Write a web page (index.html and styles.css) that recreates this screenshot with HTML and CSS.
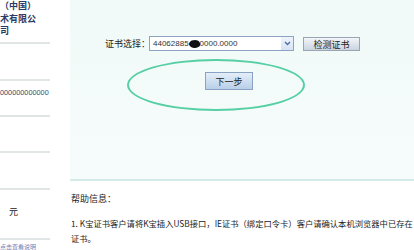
FILE: index.html
```html
<!DOCTYPE html>
<html>
<head>
  <meta charset="utf-8"/>
  <title>证书选择</title>
  <link rel="stylesheet" href="styles.css">
</head>
<body>
  <div class="page">
    <aside class="side">
      <div class="side-item item-1">
        <p class="corp">（中国）</p>
        <p class="corp">术有限公</p>
        <p class="corp">司</p>
      </div>
      <div class="side-item item-2"></div>
      <div class="side-item item-3">
        <p class="num">000000000000</p>
      </div>
      <div class="side-item item-4"></div>
      <div class="side-item item-5"></div>
      <div class="side-item item-6">
        <p class="unit">元</p>
      </div>
      <p class="side-link">点击查看说明</p>
    </aside>

    <main class="main">
      <section class="cert">
        <div class="cert-row">
          <span class="label">证书选择：</span>
          <div class="select">
            <span class="select-text">44062885<span class="blot"></span>0000.0000</span>
            <span class="select-arrow">
              <svg width="7" height="5" viewBox="0 0 7 5"><path d="M1 1 L3.5 3.5 L6 1" fill="none" stroke="#4d6fa6" stroke-width="1.4"/></svg>
            </span>
          </div>
          <button class="btn btn-check">检测证书</button>
        </div>
        <div class="next-row">
          <span class="ring"></span>
          <button class="btn btn-next">下一步</button>
        </div>
      </section>

      <section class="help">
        <p class="help-title">帮助信息：</p>
        <p class="help-text">1. K宝证书客户请将K宝插入USB接口，IE证书（绑定口令卡）客户请确认本机浏览器中已存在<br>证书。</p>
      </section>
    </main>
  </div>
</body>
</html>
```

FILE: styles.css
```css
body {
  margin: 0;
  background-color: #fff;
  font-family: "Liberation Sans", Arial, "Noto Sans CJK SC", sans-serif;
  font-size: 9px;
  color: #222;
}
p {
  margin: 0;
}
.page {
  display: flex;
  width: 414px;
  height: 250px;
  overflow: hidden;
}

/* left column */
.side {
  width: 50px;
  margin-right: 20px;
  flex-shrink: 0;
}
.side-item {
  box-sizing: border-box;
  border-bottom: 2px solid #e2e5e5;
}
.item-1 { height: 44px; }
.item-2 { height: 37px; }
.item-3 { height: 36px; padding-top: 6px; }
.item-4 { height: 36px; }
.item-5 { height: 37px; }
.item-6 { height: 50px; padding: 16px 0 0 9px; }
.corp {
  font-family: "Noto Sans CJK SC", sans-serif;
  font-weight: bold;
  color: #2a3a66;
  line-height: 12.5px;
  white-space: nowrap;
}
.num {
  color: #3b4766;
  font-size: 7.3px;
  line-height: 12px;
  white-space: nowrap;
}
.unit {
  font-family: "Noto Sans CJK SC", sans-serif;
  color: #222;
  line-height: 12px;
}
.side-link {
  font-family: "Noto Sans CJK SC", sans-serif;
  font-size: 6px;
  color: #6a84b8;
  margin-top: 2px;
  white-space: nowrap;
}

/* main area */
.main {
  flex: 1;
  display: flex;
  flex-direction: column;
}
.cert {
  position: relative;
  height: 181px;
  box-sizing: border-box;
  padding: 36px 0 0 35px;
  background: linear-gradient(#f1faf8, #f6fcfb);
  border-bottom: 2px solid #d5ebe7;
}
.cert-row {
  display: flex;
  align-items: center;
  height: 15px;
}
.label {
  font-family: "Noto Sans CJK SC", sans-serif;
  width: 44px;
  white-space: nowrap;
}
.select {
  display: flex;
  align-items: center;
  justify-content: space-between;
  box-sizing: border-box;
  width: 145px;
  height: 15px;
  border: 1px solid #8ea3c1;
  background-color: #fff;
  padding-left: 3px;
}
.select-text {
  font-size: 8px;
  color: #333;
  display: flex;
  align-items: center;
}
.blot {
  display: inline-block;
  width: 11px;
  height: 8px;
  background-color: #111;
  border-radius: 45% 55% 40% 60%;
  transform: rotate(-12deg);
}
.select-arrow {
  display: flex;
  align-items: center;
  justify-content: center;
  width: 12px;
  height: 13px;
  background: linear-gradient(#eef4fc, #d6e3f4);
}
.btn {
  font-family: "Noto Sans CJK SC", sans-serif;
  font-size: 9px;
  color: #222;
  padding: 0;
  cursor: pointer;
}
.btn-check {
  width: 57px;
  height: 14px;
  margin-left: 9px;
  border: 1px solid #9aa5b3;
  background: linear-gradient(#f3f6fa, #c9d3df);
}
.next-row {
  padding: 21px 0 0 100px;
}
.btn-next {
  width: 48px;
  height: 18px;
  border: 1px solid #8aa3c4;
  background: linear-gradient(#e4eef9, #b8cfe8);
}
.ring {
  position: absolute;
  left: 57px;
  top: 59px;
  width: 174px;
  height: 48px;
  border: 2px solid #55cfa3;
  border-radius: 50%;
  filter: blur(0.3px);
}

/* help */
.help {
  padding: 12px 0 0 1px;
  font-family: "Noto Sans CJK SC", sans-serif;
}
.help-title {
  line-height: 12px;
  margin-bottom: 11px;
}
.help-text {
  font-size: 8.3px;
  line-height: 15px;
  white-space: nowrap;
}
```
